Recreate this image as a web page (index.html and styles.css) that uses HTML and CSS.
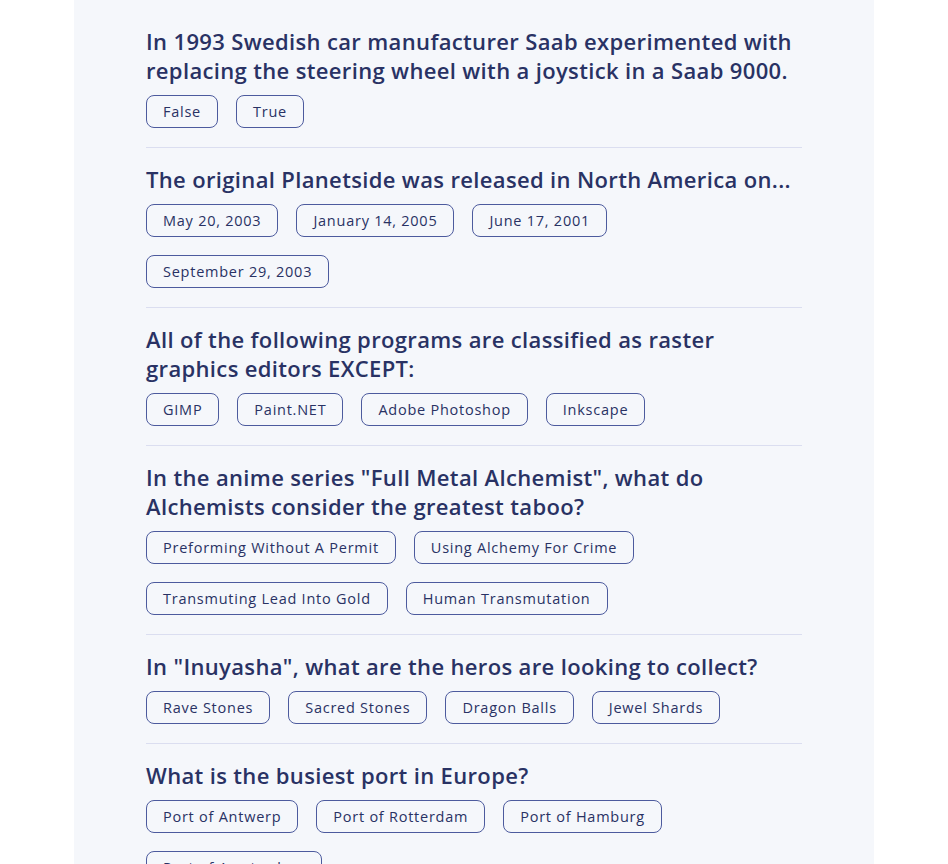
FILE: index.html
```html
<!DOCTYPE html>
<html lang="en">
<head>
<meta charset="utf-8">
<title>Quizzical</title>
<link rel="stylesheet" href="styles.css">
</head>
<body>
<main class="quiz">
  <section class="question">
    <h2 class="question-title">In 1993 Swedish car manufacturer Saab experimented with replacing the steering wheel with a joystick in a Saab 9000.</h2>
    <div class="answers">
      <button class="answer">False</button>
      <button class="answer">True</button>
    </div>
  </section>
  <section class="question">
    <h2 class="question-title">The original Planetside was released in North America on...</h2>
    <div class="answers">
      <button class="answer">May 20, 2003</button>
      <button class="answer">January 14, 2005</button>
      <button class="answer">June 17, 2001</button>
      <button class="answer">September 29, 2003</button>
    </div>
  </section>
  <section class="question">
    <h2 class="question-title">All of the following programs are classified as raster graphics editors EXCEPT:</h2>
    <div class="answers">
      <button class="answer">GIMP</button>
      <button class="answer">Paint.NET</button>
      <button class="answer">Adobe Photoshop</button>
      <button class="answer">Inkscape</button>
    </div>
  </section>
  <section class="question">
    <h2 class="question-title">In the anime series "Full Metal Alchemist", what do Alchemists consider the greatest taboo?</h2>
    <div class="answers">
      <button class="answer">Preforming Without A Permit</button>
      <button class="answer">Using Alchemy For Crime</button>
      <button class="answer">Transmuting Lead Into Gold</button>
      <button class="answer">Human Transmutation</button>
    </div>
  </section>
  <section class="question">
    <h2 class="question-title">In "Inuyasha", what are the heros are looking to collect?</h2>
    <div class="answers">
      <button class="answer">Rave Stones</button>
      <button class="answer">Sacred Stones</button>
      <button class="answer">Dragon Balls</button>
      <button class="answer">Jewel Shards</button>
    </div>
  </section>
  <section class="question">
    <h2 class="question-title">What is the busiest port in Europe?</h2>
    <div class="answers">
      <button class="answer">Port of Antwerp</button>
      <button class="answer">Port of Rotterdam</button>
      <button class="answer">Port of Hamburg</button>
      <button class="answer">Port of Amsterdam</button>
    </div>
  </section>
</main>
</body>
</html>
```
FILE: styles.css
```css
html, body {
  margin: 0;
  padding: 0;
  background: #ffffff;
}

body {
  font-family: "Open Sans", "Noto Sans", sans-serif;
  color: #293264;
}

.quiz {
  width: 800px;
  min-height: 100vh;
  margin: 0 auto;
  box-sizing: border-box;
  padding: 28px 72px 40px;
  background: #f5f7fb;
}

.question {
  padding: 18px 0 19px;
  border-bottom: 1px solid #dbdef0;
}

.question:first-child {
  padding-top: 0;
}

.question-title {
  margin: -1px 0 10px;
  font-size: 22px;
  font-weight: 600;
  letter-spacing: 0.35px;
  line-height: 29px;
  color: #293264;
}

.answers {
  display: flex;
  flex-wrap: wrap;
  gap: 18px;
}

.answer {
  font-family: "Open Sans", "Noto Sans", sans-serif;
  font-size: 14.5px;
  font-weight: 500;
  letter-spacing: 0.75px;
  line-height: 17px;
  color: #293264;
  background: transparent;
  border: 1px solid #4d5b9e;
  border-radius: 8px;
  padding: 7px 16px;
  margin: 0;
  cursor: pointer;
}
```
